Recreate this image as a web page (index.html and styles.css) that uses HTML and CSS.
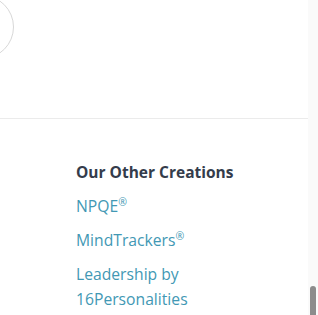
FILE: index.html
```html
<!DOCTYPE html>
<html lang="en">
<head>
  <meta charset="UTF-8">
  <title>Our Other Creations</title>
  <link rel="stylesheet" href="styles.css">
</head>
<body>
  <div class="page-wrap">
    <div class="page">
      <div class="top-area">
        <div class="avatar-ring"></div>
      </div>
      <footer class="footer">
        <h3>Our Other Creations</h3>
        <ul class="creations">
          <li><a href="#">NPQE<sup>®</sup></a></li>
          <li><a href="#">MindTrackers<sup>®</sup></a></li>
          <li><a href="#">Leadership by 16Personalities</a></li>
        </ul>
      </footer>
    </div>
    <div class="scroll-track">
      <div class="scroll-thumb"></div>
    </div>
  </div>
</body>
</html>
```

FILE: styles.css
```css
html, body {
  margin: 0;
  padding: 0;
  height: 100%;
  background: #fff;
}
body {
  font-family: 'Open Sans', 'Noto Sans', Arial, sans-serif;
  overflow: hidden;
}
.page-wrap {
  display: flex;
  height: 315px;
}
.page {
  flex: 1;
  overflow: hidden;
}
.top-area {
  height: 118px;
  border-bottom: 1px solid #ebebeb;
  overflow: hidden;
}
.avatar-ring {
  width: 62px;
  height: 62px;
  border: 1px solid #d8d8d8;
  border-radius: 50%;
  margin: -5px 0 0 -50px;
}
.footer {
  padding: 41px 0 0 76px;
}
.footer h3 {
  margin: 0 0 10px 0;
  font-size: 15.5px;
  line-height: 24px;
  font-weight: 700;
  color: #343c4b;
}
.creations {
  list-style: none;
  margin: 0;
  padding: 0;
  width: 150px;
}
.creations li {
  margin-bottom: 9px;
  font-size: 15.7px;
  line-height: 25px;
}
.creations a {
  color: #4298b4;
  text-decoration: none;
}
.creations sup {
  font-size: 10.5px;
  line-height: 0;
  vertical-align: 6px;
}
.scroll-track {
  width: 10px;
  background: #fafafa;
  display: flex;
  flex-direction: column;
  justify-content: flex-end;
  align-items: center;
}
.scroll-thumb {
  width: 6px;
  height: 29px;
  background: #8c8c8c;
  border-radius: 3px 3px 0 0;
}
```
